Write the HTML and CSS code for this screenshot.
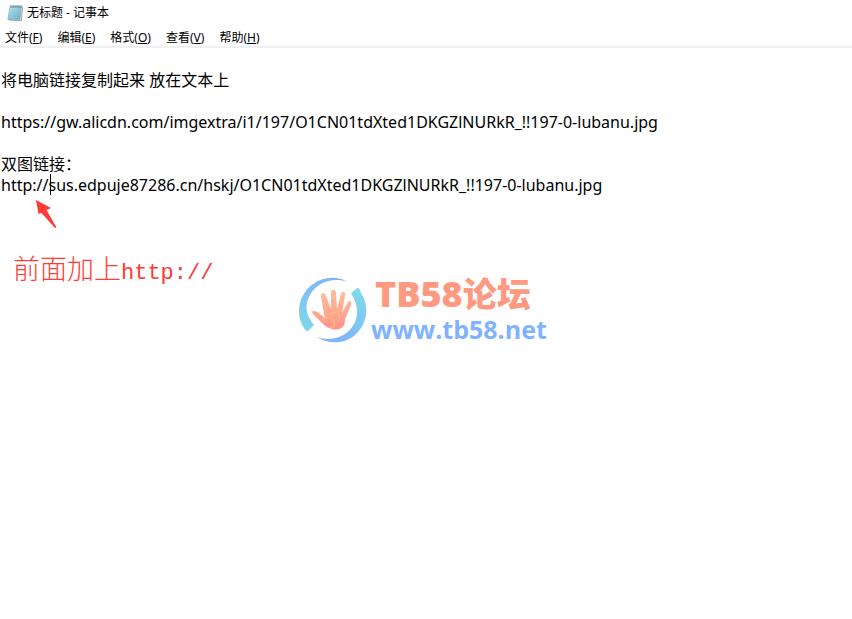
FILE: index.html
```html
<!DOCTYPE html>
<html lang="zh-CN">
<head>
<meta charset="utf-8">
<title>无标题 - 记事本</title>
<link rel="stylesheet" href="styles.css">
</head>
<body>
<header class="titlebar">
  <svg class="app-icon" viewBox="0 0 16 18" aria-hidden="true">
    <defs>
      <linearGradient id="pad" x1="0" y1="0" x2="1" y2="1">
        <stop offset="0" stop-color="#c3e9f2"/>
        <stop offset="1" stop-color="#59a9c2"/>
      </linearGradient>
    </defs>
    <path d="M4 3.500H15.500L14.500 16.500H10L2 16Z" fill="#f5f1e6" stroke="#a58f72" stroke-width=".8"/>
    <path d="M3 2.500H14.500L13 15.500H.8Z" fill="url(#pad)" stroke="#75adbd" stroke-width=".6"/>
    <path d="M2.500 6H13.800M2.200 8.500H13.500M1.900 11H13.200M1.600 13.500H13" stroke="#8bc8da" stroke-width=".5"/>
    <path d="M4 1V4M6 1V4M8 1V4M10 1V4M12 1V4M14 1V4" stroke="#70787b" stroke-width=".9"/>
  </svg>
  <h1 class="title">无标题 - 记事本</h1>
</header>
<nav class="menubar">
  <button class="menu" type="button">文件(<u>F</u>)</button>
  <button class="menu" type="button">编辑(<u>E</u>)</button>
  <button class="menu" type="button">格式(<u>O</u>)</button>
  <button class="menu" type="button">查看(<u>V</u>)</button>
  <button class="menu" type="button">帮助(<u>H</u>)</button>
</nav>
<main class="document">
  <textarea class="editor" aria-label="文本编辑器" spellcheck="false">将电脑链接复制起来 放在文本上

https://gw.alicdn.com/imgextra/i1/197/O1CN01tdXted1DKGZlNURkR_!!197-0-lubanu.jpg

双图链接：
http://sus.edpuje87286.cn/hskj/O1CN01tdXted1DKGZlNURkR_!!197-0-lubanu.jpg</textarea>
  <span class="caret"></span>
  <svg class="arrow" viewBox="0 0 22 30" aria-hidden="true">
    <path d="M1 1L16 9L11.500 11L21.500 28.500L20 29L6.500 14L3.500 15Z" fill="#ff3b36"/>
  </svg>
  <p class="note">前面加上<span class="note-code">http://</span></p>
  <div class="watermark">
    <svg class="logo" viewBox="0 0 68 68" aria-hidden="true">
      <defs>
        <linearGradient id="left" x1="0" y1="1" x2=".5" y2="0">
          <stop offset="0" stop-color="#7edce6"/>
          <stop offset="1" stop-color="#80b3fb"/>
        </linearGradient>
        <linearGradient id="right" x1="1" y1="0" x2=".5" y2="1">
          <stop offset="0" stop-color="#7ee0e5"/>
          <stop offset="1" stop-color="#80b3fb"/>
        </linearGradient>
        <linearGradient id="palm" x1="0" y1="0" x2="0" y2="1">
          <stop offset="0" stop-color="#ffc09a"/>
          <stop offset="1" stop-color="#ff9488"/>
        </linearGradient>
      </defs>
      <path d="M49 6C39 0 25 0 14 8C-1 19-4 39 5 52Q7 56 9 55L15 49C7 40 5 29 11 19C18 6 34 1 49 6Z" fill="url(#left)"/>
      <path d="M18 61C30 69 47 68 57 58C68 48 71 30 62 17Q60 10 57 13L52 17C58 27 60 36 56 46C49 61 33 66 18 61Z" fill="url(#right)"/>
      <path d="M25 38L22 20Q22 17 24 17Q26 17 27 20L32 33L32 16Q32 13 35 14Q37 14 37 17L38 33L42 18Q43 15 45 16Q47 17 46 20L43 37L49 26Q50 24 52 26Q53 27 52 29L46 43Q46 51 42 52Q37 55 30 52Q26 51 23 47L14 38Q12 35 15 35Q18 35 22 39L26 42Z" fill="url(#palm)"/>
      <path d="M24 43Q33 39 35 46Q37 52 31 52M28 38Q35 37 40 35M38 35Q42 40 40 45" fill="none" stroke="#ffc477" stroke-width="1"/>
    </svg>
    <div class="brand">
      <strong class="brand-name">TB58<span class="brand-cjk">论坛</span></strong>
      <span class="brand-url">www.tb58.net</span>
    </div>
  </div>
</main>
</body>
</html>
```

FILE: styles.css
```css
* {
  box-sizing: border-box;
}

body {
  display: flex;
  flex-direction: column;
  min-height: 100vh;
  margin: 0;
  background: #fff;
  color: #000;
  font-family: "Noto Sans", "Noto Sans CJK SC", sans-serif;
}

.titlebar {
  display: flex;
  align-items: center;
  gap: 4px;
  height: 26px;
  padding-left: 7px;
}

.app-icon {
  width: 16px;
  height: 18px;
}

.title {
  margin: 0;
  font-size: 12px;
  font-weight: 400;
  line-height: 18px;
}

.menubar {
  display: flex;
  align-items: flex-end;
  gap: 15px;
  height: 22px;
  padding-left: 5px;
  border-bottom: 2px solid #f0f0f0;
}

.menu {
  padding: 0;
  border: 0;
  background: none;
  color: inherit;
  font: 12px/16px "Noto Sans", "Noto Sans CJK SC", sans-serif;
}

.document {
  position: relative;
  display: flex;
  flex: 1;
}

.editor {
  flex: 1;
  padding: 22px 1px 0;
  border: 0;
  outline: 0;
  resize: none;
  background: none;
  color: inherit;
  font: 16px/21px "Noto Sans", "Noto Sans CJK SC", sans-serif;
}

.caret {
  position: absolute;
  top: 126px;
  left: 50px;
  width: 1px;
  height: 21px;
  background: #000;
}

.arrow {
  position: absolute;
  top: 151px;
  left: 35px;
  width: 22px;
  height: 30px;
}

.note {
  position: absolute;
  top: 202px;
  left: 13px;
  margin: 0;
  color: #ff3b36;
  font: 27px/36px "Noto Sans CJK SC", sans-serif;
  font-weight: 300;
}

.note-code {
  font-family: "Liberation Mono", monospace;
  font-size: 22px;
}

.watermark {
  position: absolute;
  top: 228px;
  left: 299px;
  display: flex;
  gap: 4px;
}

.logo {
  width: 68px;
  height: 68px;
}

.brand {
  display: flex;
  flex-direction: column;
  font-family: "Open Sans", "Noto Sans CJK SC", sans-serif;
  font-weight: 700;
}

.brand-name {
  padding-left: 4px;
  color: #ff9980;
  font-size: 36px;
  line-height: 36px;
}

.brand-cjk {
  font-size: 34px;
}

.brand-url {
  color: #80b3ff;
  font-size: 25px;
  line-height: 34px;
}
```
